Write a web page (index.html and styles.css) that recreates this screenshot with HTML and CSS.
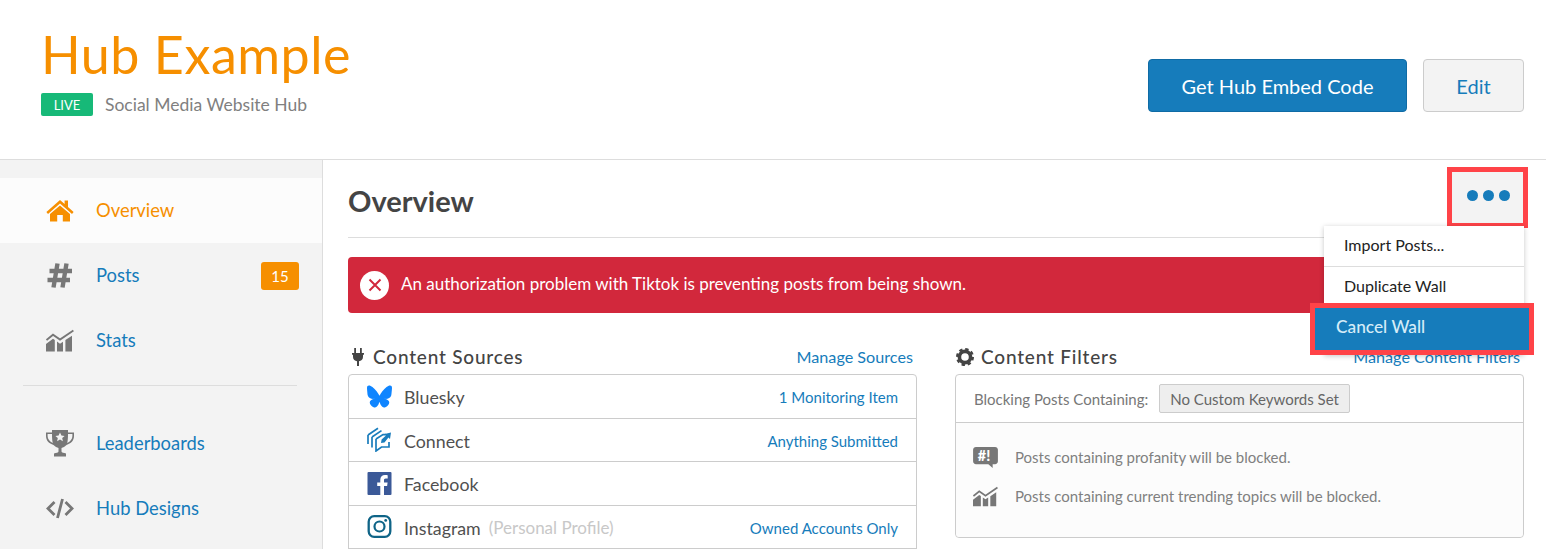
FILE: index.html
```html
<!DOCTYPE html>
<html lang="en">
<head>
<meta charset="utf-8">
<title>Hub Example</title>
<link rel="stylesheet" href="styles.css">
</head>
<body>
<header class="top">
  <div class="title-block">
    <h1 class="hub-title">Hub Example</h1>
    <div class="subline"><span class="live">LIVE</span><span class="subtitle">Social Media Website Hub</span></div>
  </div>
  <div class="top-actions">
    <a class="btn btn-primary">Get Hub Embed Code</a>
    <a class="btn btn-plain">Edit</a>
  </div>
</header>
<div class="body-wrap">
  <nav class="side">
    <a class="nav-item active">
      <svg class="nav-icon" viewBox="0 0 28 22"><path fill="#f68f00" d="M14 0.5 L18.6 4.6 V1 H22 V7.6 L27.6 12.6 L26 14.4 L14 3.9 L2 14.4 L0.4 12.6 Z M14 6 L24 14.6 V22 H16.8 V15.5 H11.2 V22 H4 V14.6 Z"/></svg>
      <span>Overview</span>
    </a>
    <a class="nav-item">
      <svg class="nav-icon" viewBox="0 0 28 26"><path fill="none" stroke="#777" stroke-width="4.4" d="M11.5 1 L7.5 25 M20.5 1 L16.5 25 M3.5 8.5 H26 M1.5 17.5 H24"/></svg>
      <span>Posts</span><b class="count">15</b>
    </a>
    <a class="nav-item">
      <svg class="nav-icon" viewBox="0 0 28 22"><use href="#chart"/></svg>
      <span>Stats</span>
    </a>
    <hr class="side-rule">
    <a class="nav-item">
      <svg class="nav-icon" viewBox="0 0 28 27"><path fill="#777" d="M6 0 H22 V2.5 H28 V6 C28 10.5 25 13.5 20.5 15 C19 16.6 17 17.6 15.5 18 V21.5 C15.5 22.5 18 23 20 23.5 V26.5 H8 V23.5 C10 23 12.5 22.5 12.5 21.5 V18 C11 17.6 9 16.6 7.5 15 C3 13.5 0 10.5 0 6 V2.5 H6 Z M1.6 4 V6 C1.6 9 3.6 11.6 6.8 13 C6.2 10.8 6 7.5 6 4 Z M26.4 4 H22 C22 7.5 21.8 10.8 21.2 13 C24.4 11.6 26.4 9 26.4 6 Z"/><path fill="#f3f3f3" d="M14 2.6 L15.4 5.6 L18.6 6 L16.2 8.1 L16.9 11.2 L14 9.6 L11.1 11.2 L11.8 8.1 L9.4 6 L12.6 5.6 Z"/></svg>
      <span>Leaderboards</span>
    </a>
    <a class="nav-item">
      <svg class="nav-icon" viewBox="0 0 28 20"><path fill="none" stroke="#777" stroke-width="2.8" d="M8.5 3.5 L2 10 L8.5 16.5 M19.5 3.5 L26 10 L19.5 16.5 M16.5 0.5 L11.5 19.5"/></svg>
      <span>Hub Designs</span>
    </a>
  </nav>
  <main class="content">
    <div class="page-head">
      <h2 class="page-title">Overview</h2>
      <button class="more" aria-label="More"><i></i><i></i><i></i></button>
    </div>
    <div class="alert">
      <span class="alert-icon"><svg viewBox="0 0 14 14"><path fill="none" stroke="#d2283c" stroke-width="2" d="M1.5 1.5 L12.5 12.5 M12.5 1.5 L1.5 12.5"/></svg></span>
      <span class="alert-text">An authorization problem with Tiktok is preventing posts from being shown.</span>
    </div>
    <div class="columns">
      <section class="col">
        <div class="col-head">
          <h3><svg class="head-icon plug" viewBox="0 0 12 18"><path fill="#444" d="M2.2 0 H4 V5 H8 V0 H9.8 V5 H12 V6.8 H11 V9 C11 11.5 9 13 7 13.3 V18 H5 V13.3 C3 13 1 11.5 1 9 V6.8 H0 V5 H2.2 Z"/></svg>Content Sources</h3>
          <a class="head-link">Manage Sources</a>
        </div>
        <ul class="sources">
          <li>
            <svg class="src-icon" viewBox="0 0 568 501"><path fill="#0f85ff" d="M123.121 33.664C188.241 82.553 258.281 181.68 284 234.873c25.719-53.192 95.759-152.32 160.879-201.21C491.866-1.611 568-28.906 568 57.947c0 17.346-9.945 145.713-15.778 166.555-20.275 72.453-94.155 90.933-159.875 79.748C507.222 323.8 536.444 388.56 473.333 453.32c-119.86 122.992-172.272-30.859-185.702-70.281-2.462-7.227-3.614-10.608-3.631-7.733-.017-2.875-1.169.506-3.631 7.733-13.43 39.422-65.842 193.273-185.702 70.281-63.111-64.76-33.889-129.52 80.986-149.071-65.72 11.185-139.6-7.295-159.875-79.748C9.945 203.659 0 75.291 0 57.946 0-28.906 76.135-1.612 123.121 33.664Z"/></svg>
            <span class="src-name">Bluesky</span><a class="src-info">1 Monitoring Item</a>
          </li>
          <li>
            <svg class="src-icon connect" viewBox="0 0 25 25"><g fill="none" stroke="#1a7dbc" stroke-width="1.7"><path d="M1 8 V17 M1 8 L11 1.2 M5 10 V20.5 M5 10 L14.5 3.6 M9 12 V24 L14.5 20 H22 V15 M9 12 L16 7.6 H19"/></g><path fill="#1a7dbc" d="M14 16 L14.6 12.5 L19 8.6 L17.6 7 L24 5.5 L23 12 L21.4 10.6 L17.5 15.5 Z"/></svg>
            <span class="src-name">Connect</span><a class="src-info">Anything Submitted</a>
          </li>
          <li>
            <svg class="src-icon" viewBox="0 0 24 23"><rect width="24" height="23" rx="1" fill="#3b5998"/><path fill="#fff" d="M16.5 23 V14 H19.6 L20.1 10.4 H16.5 V8.2 C16.5 7.1 16.9 6.4 18.3 6.4 H20.2 V3.2 C19.8 3.1 18.7 3 17.5 3 C14.7 3 12.8 4.7 12.8 7.8 V10.4 H9.7 V14 H12.8 V23 Z"/></svg>
            <span class="src-name">Facebook</span>
          </li>
          <li>
            <svg class="src-icon" viewBox="0 0 24 23"><rect x="1.2" y="1.2" width="21.6" height="20.6" rx="5.5" fill="none" stroke="#0f6487" stroke-width="2.3"/><circle cx="12" cy="11.5" r="5" fill="none" stroke="#0f6487" stroke-width="2.2"/><circle cx="18.2" cy="5.4" r="1.4" fill="#0f6487"/></svg>
            <span class="src-name">Instagram</span><span class="src-note">(Personal Profile)</span><a class="src-info">Owned Accounts Only</a>
          </li>
        </ul>
      </section>
      <section class="col">
        <div class="col-head">
          <h3><svg class="head-icon gear" viewBox="0 0 18 18"><circle cx="9" cy="9" r="5.6" fill="none" stroke="#444" stroke-width="3.6"/><circle cx="9" cy="9" r="7.9" fill="none" stroke="#444" stroke-width="2.2" stroke-dasharray="3.4 2.8"/></svg>Content Filters</h3>
          <a class="head-link">Manage Content Filters</a>
        </div>
        <div class="filters">
          <div class="filter-top"><span>Blocking Posts Containing:</span><span class="tag">No Custom Keywords Set</span></div>
          <div class="filter-body">
            <p class="rule"><svg class="rule-icon" viewBox="0 0 26 22"><path fill="#777" d="M3 0 H23 C24.7 0 26 1.3 26 3 V15 C26 16.7 24.7 18 23 18 H20.5 V22 L16 18 H3 C1.3 18 0 16.7 0 15 V3 C0 1.3 1.3 0 3 0 Z"/><text x="5" y="14.5" class="rule-glyph">#!</text></svg>Posts containing profanity will be blocked.</p>
            <p class="rule"><svg class="rule-icon" viewBox="0 0 28 22"><use href="#chart"/></svg>Posts containing current trending topics will be blocked.</p>
          </div>
        </div>
      </section>
    </div>
  </main>
</div>
<div class="menu">
  <a class="menu-item">Import Posts...</a>
  <a class="menu-item">Duplicate Wall</a>
  <a class="menu-item danger">Cancel Wall</a>
</div>
<svg class="defs" aria-hidden="true"><defs><g id="chart"><path fill="#777" d="M0 22 V14.5 L7 9.2 L8.8 10.4 V22 Z M11 22 V12 L14 14.2 L17 12.2 V22 Z M19.4 22 V10.6 L26 6.2 V22 Z"/><path fill="none" stroke="#777" stroke-width="1.9" d="M0.5 10.5 L7 5.2 L14 10 L27.4 1"/></g></defs></svg>
</body>
</html>
```
FILE: styles.css
```css
* { box-sizing: border-box; }
html, body { margin: 0; padding: 0; }
body {
  width: 1546px;
  height: 549px;
  overflow: hidden;
  background: #fff;
  font-family: Lato, "Liberation Sans", sans-serif;
  color: #444;
}
a { color: #167cbb; text-decoration: none; }
.defs { width: 0; height: 0; display: block; }

.top {
  height: 160px;
  border-bottom: 1px solid #ddd;
  display: flex;
  justify-content: space-between;
  padding: 59px 22px 0 41px;
}
.title-block { margin-top: -36px; }
.hub-title {
  margin: 0;
  font-size: 52px;
  line-height: 62px;
  font-weight: 400;
  letter-spacing: .55px;
  color: #f68f00;
}
.subline { display: flex; align-items: center; gap: 12px; margin-top: 8px; }
.live {
  width: 52px;
  height: 23px;
  background: #17b978;
  border-radius: 2px;
  color: #fff;
  font-size: 13px;
  line-height: 24px;
  text-align: center;
}
.subtitle { font-size: 17.5px; color: #808080; }
.top-actions { display: flex; gap: 16px; }
.btn {
  height: 53px;
  border-radius: 4px;
  font-size: 20px;
  line-height: 53px;
  text-align: center;
  border: 1px solid;
}
.btn-primary { width: 259px; background: #167cbb; border-color: #0f6ba5; color: #fff; }
.btn-plain { width: 101px; background: #f3f3f3; border-color: #ccc; }

.body-wrap { display: flex; height: 389px; }
.side {
  width: 323px;
  flex: none;
  background: #f3f3f3;
  border-right: 1px solid #ddd;
  padding-top: 18px;
}
.nav-item {
  display: flex;
  align-items: center;
  height: 65px;
  padding: 0 23px 0 46px;
  font-size: 18.4px;
}
.nav-item span { margin-left: 22px; padding-bottom: 2px; }
.nav-item.active { background: #fcfcfc; color: #f68f00; }
.nav-icon { width: 28px; height: 27px; flex: none; }
.count {
  margin-left: auto;
  width: 38px;
  height: 28px;
  background: #f68f00;
  color: #fff;
  border-radius: 3px;
  font-weight: 400;
  font-size: 15px;
  line-height: 28px;
  text-align: center;
}
.side-rule {
  margin: 12px 25px 25px 23px;
  border: 0;
  border-top: 1px solid #ddd;
}

.content { flex: 1; min-width: 0; padding: 0 22px 0 25px; }
.page-head {
  height: 78px;
  border-bottom: 1px solid #ddd;
  display: flex;
  justify-content: space-between;
}
.page-title {
  margin: 21px 0 0;
  font-size: 29px;
  line-height: 40px;
  font-weight: 700;
  color: #444;
}
.more {
  width: 81px;
  height: 61px;
  margin: 7px -4px 0 0;
  padding: 0 0 4px 2px;
  border: 5px solid #ff4348;
  background: #f3f3f3;
  display: flex;
  align-items: center;
  justify-content: center;
  gap: 5px;
}
.more i { width: 11px; height: 11px; border-radius: 50%; background: #167cbb; }

.alert {
  margin-top: 19px;
  height: 56px;
  background: #d2283c;
  border-radius: 4px;
  color: #fff;
  font-size: 17px;
  display: flex;
  align-items: center;
  padding-left: 12px;
  gap: 12px;
}
.alert-text { padding-bottom: 3px; }
.alert-icon {
  width: 29px;
  height: 29px;
  border-radius: 50%;
  background: #fff;
  display: flex;
  align-items: center;
  justify-content: center;
}
.alert-icon svg { width: 14px; height: 14px; }

.columns { display: flex; gap: 38px; margin-top: 27px; }
.col { width: 569px; }
.col-head {
  display: flex;
  justify-content: space-between;
  height: 34px;
  padding-right: 4px;
}
.col-head h3 {
  margin: 0;
  font-size: 19px;
  line-height: 26px;
  font-weight: 500;
  letter-spacing: .8px;
  color: #444;
  display: flex;
  align-items: center;
}
.head-link { font-size: 16.2px; line-height: 26px; margin-top: 4px; }
.head-icon { flex: none; margin-right: 9px; }
.plug { width: 12px; height: 18px; margin-left: 4px; }
.gear { width: 18px; height: 18px; margin-left: 1px; margin-right: 7px; }

.sources {
  list-style: none;
  margin: 0;
  padding: 0;
  border: 1px solid #ccc;
  border-radius: 4px 4px 0 0;
}
.sources li {
  height: 43.5px;
  display: flex;
  align-items: center;
  padding: 2px 18px 0;
  border-bottom: 1px solid #ccc;
  font-size: 17.8px;
}
.src-icon { width: 25px; height: 23px; flex: none; margin-right: 12px; margin-top: -2px; }
.src-icon.connect { height: 25px; }
.src-name { color: #505050; }
.src-note { color: #c8c8c8; margin-left: 8px; font-size: 17px; }
.src-info { margin-left: auto; font-size: 15px; }

.filters { border: 1px solid #ccc; border-radius: 4px; }
.filter-top {
  height: 48px;
  display: flex;
  align-items: center;
  gap: 11px;
  padding-left: 18px;
  border-bottom: 1px solid #ccc;
  font-size: 15px;
  color: #777;
}
.tag {
  height: 29px;
  line-height: 28px;
  padding: 0 10px;
  background: #eee;
  border: 1px solid #ccc;
  border-radius: 2px;
  color: #666;
}
.filter-body { height: 114px; background: #fcfcfc; padding-top: 14px; border-radius: 0 0 4px 4px; }
.rule {
  margin: 0;
  height: 39px;
  display: flex;
  align-items: center;
  padding-left: 17px;
  font-size: 15px;
  color: #808080;
}
.rule-icon { width: 25px; height: 21px; flex: none; margin-right: 17px; margin-top: 1px; }
.rule-glyph { fill: #fff; font-size: 15px; font-weight: 900; }

.menu {
  position: absolute;
  left: 1324px;
  top: 226px;
  width: 200px;
  background: #fff;
  box-shadow: 0 1px 5px rgba(0, 0, 0, .22);
}
.menu-item {
  display: block;
  height: 41px;
  padding-left: 20px;
  font-size: 16px;
  line-height: 38px;
  color: #222;
  border-bottom: 1px solid #ddd;
}
.menu-item.danger {
  position: relative;
  width: 224px;
  height: 52px;
  margin: -5px 0 0 -14px;
  padding-left: 21px;
  border: 5px solid #ff4348;
  background: #167cbb;
  color: #d5ecf8;
  font-size: 17.3px;
  font-weight: 500;
}
```
